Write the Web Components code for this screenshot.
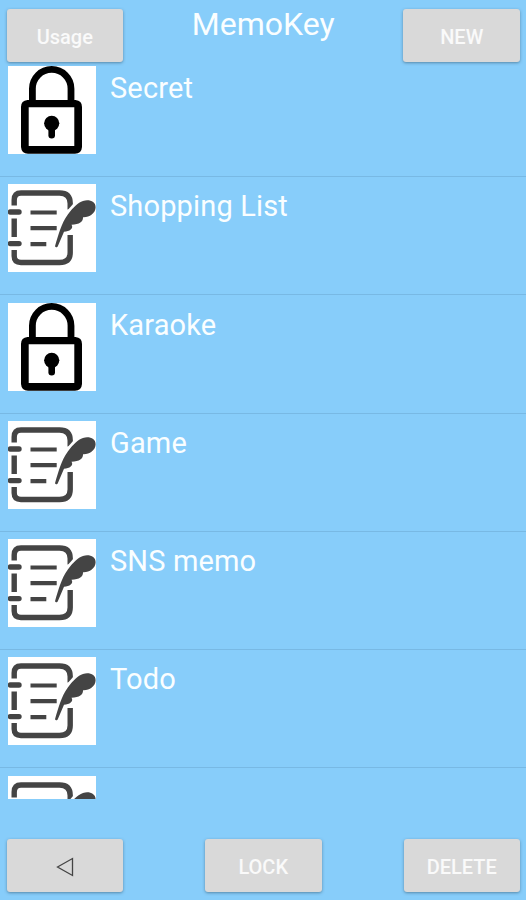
<!DOCTYPE html>
<html lang="en">
<head>
<meta charset="utf-8">
<title>MemoKey</title>
<style>
html, body { margin: 0; height: 100%; overflow: hidden; background: #87cdfa; }
body { font-family: Roboto, "Liberation Sans", sans-serif; color: #fafeff; }
</style>
</head>
<body>
<memo-app></memo-app>
<script>
const LOCK = `<svg viewBox="0 0 88 88"><path d="M24.4 37V22.7a19.3 19.3 0 0 1 38.6 0V37" fill="none" stroke="#000" stroke-width="6.8"/><path fill-rule="evenodd" d="M19.5 34H67.5Q74 34.5 74 41V81Q73.5 87.7 67 87.7H20Q13.5 87.7 13 81V41Q13 34.5 19.5 34ZM20.7 41.3V80H66.3V41.3Z"/><circle cx="43.7" cy="57.3" r="7.6"/><path d="M43.7 60V69.3" stroke="#000" stroke-width="6.6" stroke-linecap="round"/></svg>`;
const MEMO = `<svg viewBox="0 0 88 88"><g fill="none" stroke="#444" stroke-width="5.4"><path d="M6.2 21.500V16Q6.200 9 13 9H51.500Q62.200 9 62.200 19.500V25.500M6.200 34.500V53M6.200 66V72Q6.200 78.500 13 78.500H51.500Q62.200 78.500 62.200 68.500V51"/><path d="M2.400 28H11M2.400 59.600H11" stroke-linecap="round"/><path d="M22.500 28.500H48.700M22.500 44.200H48.700M22.500 60.200H38.300" stroke-width="4.200"/></g><path d="M57.500 28.500L66 19V23L59.500 33Z" fill="#fff"/><path fill="#444" d="M47 62.200C50 52 53.500 39 59.500 31C64.500 24 70 18.500 75 17C81 15 87.800 17.500 87.600 23.500C87.400 29.500 81 33.600 75 33.200C75.300 37.500 71.500 40.400 63.500 40.700C66 44 61.500 47.700 56 47.700L49.700 62.400Q48 64.300 47 62.200Z"/></svg>`;

const define = (name, html, setup) => {
  const template = document.createElement('template');
  template.innerHTML = html;
  customElements.define(name, class extends HTMLElement {
    static get observedAttributes() { return ['kind']; }
    constructor() {
      super();
      this.attachShadow({ mode: 'open' }).append(template.content.cloneNode(true));
    }
    connectedCallback() { if (setup) setup(this); }
    attributeChangedCallback() { if (setup) setup(this); }
  });
};

define('memo-icon', `<style>
:host { display: block; width: 88px; height: 88px; background: #fff; flex: none; }
svg { display: block; width: 100%; height: 100%; }
</style><div id="art"></div>`, el => {
  el.shadowRoot.getElementById('art').innerHTML = el.getAttribute('kind') === 'lock' ? LOCK : MEMO;
});

define('memo-button', `<style>
:host { display: block; width: 116.5px; height: 53px; }
button { all: unset; box-sizing: border-box; width: 100%; height: 100%; display: flex; align-items: center; justify-content: center;
  padding-top: 3px; background: #d9d9d9; border-radius: 3px; box-shadow: 0 1px 3px rgba(40,70,90,.5);
  font-size: 20px; line-height: 24px; font-weight: 500; color: #fafafa; }
::slotted(svg) { display: block; width: 18px; height: 20px; }
</style><button><slot></slot></button>`);

define('memo-row', `<style>
:host { box-sizing: border-box; display: flex; gap: 14px; height: 118.3px; padding: 7.3px 8px 0; border-bottom: 1.5px solid #78b9e4; flex: none; }
span { font-size: 29px; line-height: 34px; padding-top: 5px; letter-spacing: .15px; white-space: nowrap; }
</style><memo-icon></memo-icon><span><slot></slot></span>`, el => {
  el.shadowRoot.querySelector('memo-icon').setAttribute('kind', el.getAttribute('kind'));
});

define('memo-header', `<style>
:host { box-sizing: border-box; display: flex; justify-content: space-between; align-items: flex-start; height: 58.7px; padding: 9px 6px 0 6.5px; position: relative; }
h1 { margin: -4px 0 0; font-size: 32px; line-height: 38px; font-weight: 400; }
</style><memo-button><slot name="start"></slot></memo-button><h1><slot></slot></h1><memo-button><slot name="end"></slot></memo-button>`);

define('memo-list', `<style>
:host { display: flex; flex-direction: column; height: 740px; overflow: hidden; }
</style><slot></slot>`);

define('memo-footer', `<style>
:host { display: flex; justify-content: space-between; padding: 0 6px 0 6.5px; margin-top: 40.3px; }
</style><slot></slot>`);

define('memo-app', `<style>
:host { display: flex; flex-direction: column; height: 900px; overflow: hidden; }
</style>
<memo-header><span slot="start">Usage</span>MemoKey<span slot="end">NEW</span></memo-header>
<memo-list>
<memo-row kind="lock">Secret</memo-row>
<memo-row kind="memo">Shopping List</memo-row>
<memo-row kind="lock">Karaoke</memo-row>
<memo-row kind="memo">Game</memo-row>
<memo-row kind="memo">SNS memo</memo-row>
<memo-row kind="memo">Todo</memo-row>
<memo-row kind="memo"></memo-row>
</memo-list>
<memo-footer>
<memo-button><svg viewBox="0 0 18 20"><path d="M1.5 10L16.5 1.500V18.500Z" fill="none" stroke="#444" stroke-width="1.300"/></svg></memo-button>
<memo-button>LOCK</memo-button>
<memo-button>DELETE</memo-button>
</memo-footer>`);
</script>
</body>
</html>
